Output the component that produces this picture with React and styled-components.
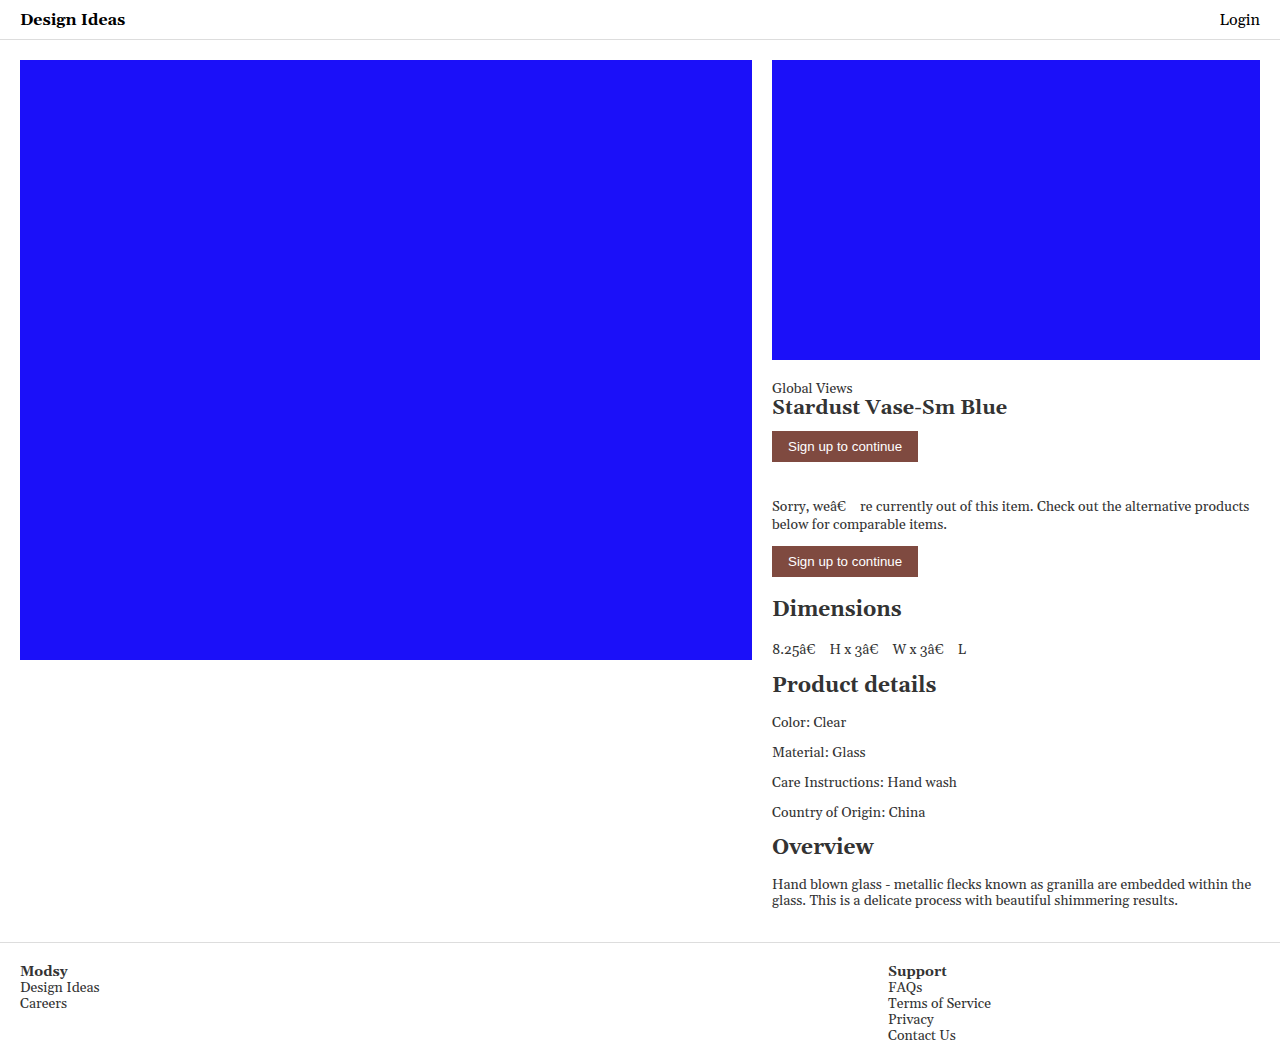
import React from 'react';
import styled, { createGlobalStyle } from 'styled-components';

const GlobalStyle = createGlobalStyle`
  *, *::before, *::after { box-sizing: border-box; }
  body {
    margin: 0;
    background: #fff;
    color: #333;
    font-family: Georgia, Gelasio, "Liberation Serif", serif;
    font-size: 14px;
    line-height: 16px;
  }
  h1, h2, h3, p, ul { margin: 0; padding: 0; }
  ul { list-style: none; }
  a { color: inherit; text-decoration: none; }
`;

const Header = styled.header`
  display: flex;
  align-items: center;
  justify-content: space-between;
  height: 40px;
  padding: 0 20px;
  border-bottom: 1px solid #ddd;
  color: #000;
  font-size: 16px;
`;

const NavLink = styled.a`
  font-weight: ${({ $strong }) => ($strong ? 700 : 400)};
`;

const Product = styled.main`
  display: grid;
  grid-template-columns: 3fr 2fr;
  gap: 20px;
  align-items: start;
  padding: 20px 20px 33px;
`;

const Picture = styled.div`
  height: ${({ $height }) => $height}px;
  background: #1b10f9;
`;

const Info = styled.div`
  padding-top: 21px;
`;

const Title = styled.h1`
  margin-bottom: 12px;
  font-size: 20px;
  line-height: 22px;
`;

const Button = styled.button`
  display: block;
  height: 31px;
  padding: 0 16px;
  border: 0;
  background: #7f4a40;
  color: #fff;
  font-family: "Liberation Sans", Arial, sans-serif;
  cursor: pointer;
`;

const Notice = styled.p`
  margin: 36px 0 12px;
  line-height: 18px;
`;

const SectionTitle = styled.h2`
  margin-bottom: 17px;
  font-size: 21px;
  line-height: 24px;
`;

const Details = styled.div`
  display: flex;
  flex-direction: column;
  gap: 14px;
`;

const Section = styled.section`
  margin-top: 15px;

  &:first-of-type {
    margin-top: 21px;
    line-height: 18px;
  }

  &:first-of-type ${SectionTitle} {
    margin-bottom: 19px;
  }
`;

const Footer = styled.footer`
  display: grid;
  grid-template-columns: 7fr 3fr;
  padding: 21px 20px 19px;
  border-top: 1px solid #ddd;
`;

const FooterTitle = styled.h3`
  font-size: 14px;
`;

const footerGroups = [
  { title: 'Modsy', links: ['Design Ideas', 'Careers'] },
  { title: 'Support', links: ['FAQs', 'Terms of Service', 'Privacy', 'Contact Us'] },
];

const sections = [
  { title: 'Dimensions', lines: ['8.25â€\u2003H x 3â€\u2003W x 3â€\u2003L'] },
  {
    title: 'Product details',
    lines: ['Color: Clear', 'Material: Glass', 'Care Instructions: Hand wash', 'Country of Origin: China'],
  },
  {
    title: 'Overview',
    lines: [
      'Hand blown glass - metallic flecks known as granilla are embedded within the glass. This is a delicate process with beautiful shimmering results.',
    ],
  },
];

export default function App() {
  return (
    <>
      <GlobalStyle />
      <Header>
        <NavLink href="#ideas" $strong>Design Ideas</NavLink>
        <NavLink href="#login">Login</NavLink>
      </Header>
      <Product>
        <Picture $height={600} />
        <div>
          <Picture $height={300} />
          <Info>
            <p>Global Views</p>
            <Title>Stardust Vase-Sm Blue</Title>
            <Button type="button">Sign up to continue</Button>
            <Notice>
              {'Sorry, weâ€\u2003re currently out of this item. Check out the alternative products below for comparable items.'}
            </Notice>
            <Button type="button">Sign up to continue</Button>
            {sections.map(({ title, lines }) => (
              <Section key={title}>
                <SectionTitle>{title}</SectionTitle>
                <Details>
                  {lines.map((line) => <p key={line}>{line}</p>)}
                </Details>
              </Section>
            ))}
          </Info>
        </div>
      </Product>
      <Footer>
        {footerGroups.map(({ title, links }) => (
          <div key={title}>
            <FooterTitle>{title}</FooterTitle>
            <ul>
              {links.map((link) => <li key={link}><a href="#footer">{link}</a></li>)}
            </ul>
          </div>
        ))}
      </Footer>
    </>
  );
}
